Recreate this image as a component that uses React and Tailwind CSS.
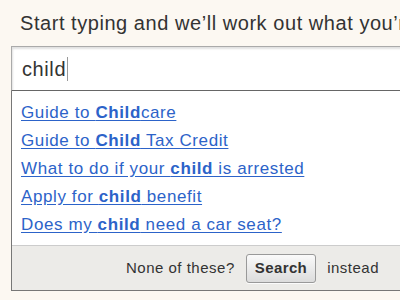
import React from 'react';

const results = [
  [['Guide to ', false], ['Child', true], ['care', false]],
  [['Guide to ', false], ['Child', true], [' Tax Credit', false]],
  [['What to do if your ', false], ['child', true], [' is arrested', false]],
  [['Apply for ', false], ['child', true], [' benefit', false]],
  [['Does my ', false], ['child', true], [' need a car seat?', false]],
];

const App = () => {
  return (
    <div className="w-[400px] h-[300px] overflow-hidden bg-[#fcf8f2] text-[#333] font-['Liberation_Sans',Arial,sans-serif]">
      <div className="pt-[11px] pl-[20px] text-[20px] leading-[24px] tracking-[0.55px] whitespace-nowrap">
        Start typing and we’ll work out what you’re looking for
      </div>

      <div className="ml-[11px] mt-[11px] w-[400px]">
        <div className="h-[45px] bg-white border-t border-l border-[#aaa] border-b border-b-[#666] shadow-[inset_1px_2px_2px_rgba(0,0,0,0.12)] flex items-center pl-[10px] text-[20px] tracking-[0.6px]">
          <span>child</span>
          <span className="ml-[1px] w-px h-[24px] bg-[#999]"></span>
        </div>

        <div className="border-l border-b border-[#777]">
          <ul className="bg-white pt-[12px] pb-[10px] pl-[9px] flex flex-col gap-[8px]">
            {results.map((parts, i) => (
              <li key={i} className="text-[17px] leading-[20px] tracking-[0.6px]">
                <a href="#" className="text-[#2c63c9] underline underline-offset-[2px]">
                  {parts.map(([t, b], j) => (
                    <span key={j} className={b ? 'font-bold' : ''}>{t}</span>
                  ))}
                </a>
              </li>
            ))}
          </ul>
          <div className="h-[45px] bg-[#ecebe8] border-t border-[#ccc] flex items-center pl-[114px] text-[15px] tracking-[0.5px]">
            <span>None of these?</span>
            <button className="ml-[11px] h-[29px] px-[8px] rounded-[3px] border border-[#999] bg-gradient-to-b from-[#fafafa] to-[#dcdcdc] font-bold text-[15px] tracking-[0.4px] text-[#333] shadow-[0_1px_0_rgba(255,255,255,0.8)]">
              Search
            </button>
            <span className="ml-[11px]">instead</span>
          </div>
        </div>
      </div>
    </div>
  );
};

export default App;
